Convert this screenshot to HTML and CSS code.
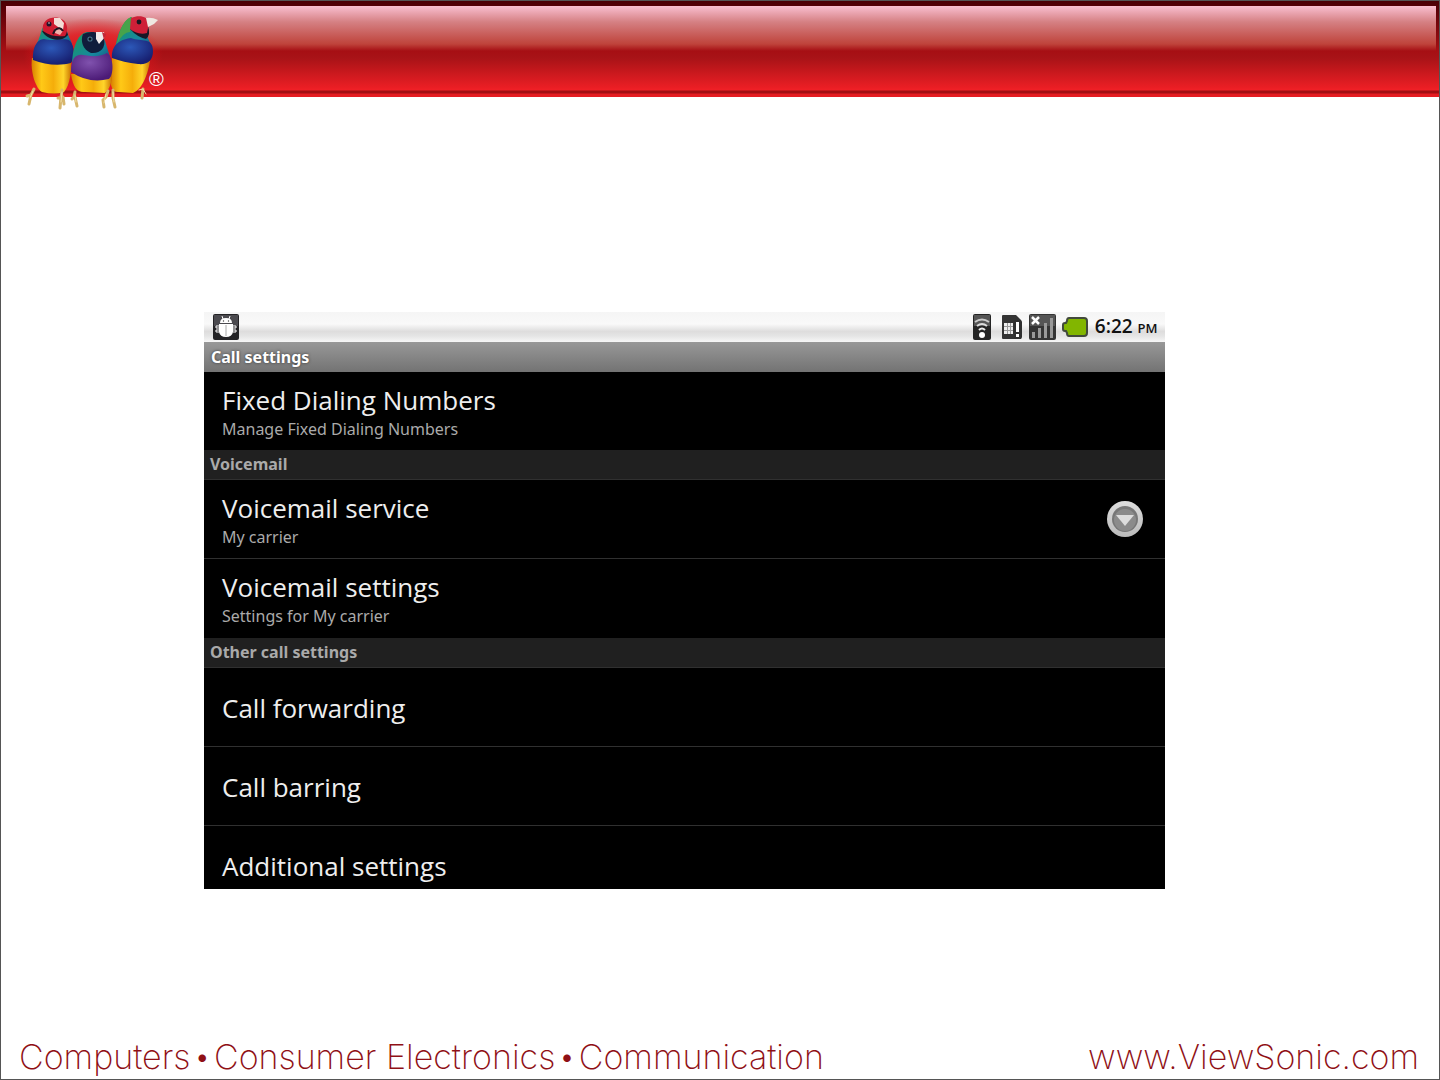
FILE: index.html
```html
<!DOCTYPE html>
<html lang="en">
<head>
  <meta charset="UTF-8" />
  <meta name="viewport" content="width=device-width, initial-scale=1.0" />
  <title>Call settings</title>
  <link rel="stylesheet" href="styles.css">
</head>
<body>
  <header class="banner">
    <svg class="logo" viewBox="0 0 150 110" role="img" aria-label="ViewSonic">
      <defs>
        <linearGradient id="belly" x1="0" x2="1" y1="0" y2="0">
          <stop offset="0" stop-color="#d98200" />
          <stop offset=".25" stop-color="#ffc917" />
          <stop offset=".55" stop-color="#f5ad0a" />
          <stop offset=".8" stop-color="#ffd52a" />
          <stop offset="1" stop-color="#c97100" />
        </linearGradient>
        <radialGradient id="blue" cx=".45" cy=".35" r=".65">
          <stop offset="0" stop-color="#2c58b8" />
          <stop offset="1" stop-color="#171f70" />
        </radialGradient>
        <radialGradient id="purple" cx=".45" cy=".35" r=".65">
          <stop offset="0" stop-color="#8052ae" />
          <stop offset="1" stop-color="#4c1b77" />
        </radialGradient>
        <linearGradient id="teal" x1="0" x2="1" y1="0" y2="1">
          <stop offset="0" stop-color="#1b9a58" />
          <stop offset=".6" stop-color="#16889f" />
          <stop offset="1" stop-color="#124a78" />
        </linearGradient>
        <radialGradient id="glow">
          <stop offset="0" stop-color="#e8141c" />
          <stop offset=".6" stop-color="#e8141c" stop-opacity=".7" />
          <stop offset="1" stop-color="#e8141c" stop-opacity="0" />
        </radialGradient>
      </defs>

      <ellipse fill="url(#glow)" cx="72" cy="55" rx="70" ry="37" />

      <!-- left bird -->
      <path fill="url(#belly)" d="M11 58 C9 72 15 89 21 92 Q34 95 43 92 C49 85 51 70 50 58Z" />
      <path fill="url(#teal)" d="M13 50 C16 43 19 37 21 29 C26 21 43 20 46 31 C47 37 52 42 52 50Z" />
      <path fill="url(#blue)" d="M12 60 C11 48 16 39 23 39 C34 42 43 37 49 41 C54 47 54 58 50 63 C39 66 24 65 12 60Z" />
      <path fill="#1c1728" d="M21 31 C25 39 39 44 47 35 L44 26Z" />
      <path fill="#cf1b30" d="M22 31 C20 20 30 16 38 18 C47 20 48 31 44 36 C37 37 29 36 22 31Z" />
      <path fill="#f3dcd6" d="M33 18 L39 18 L43 23 L42 30 L37 27 L33 24Z" />
      <path fill="#efb0aa" d="M33 29 Q38 27 42 31 L39 35 L34 33Z" />
      <path fill="none" stroke="#201320" stroke-width="2" d="M32 34 L34 30 Q39 26 42 31" />
      <circle fill="#20152a" cx="28" cy="24" r="2.5" /><circle fill="#a1848a" cx="28" cy="23" r="1" />

      <!-- right bird -->
      <path fill="url(#belly)" d="M91 58 L90 85 Q92 93 98 92 L112 93 C122 89 127 73 129 61Z" />
      <path fill="url(#teal)" d="M94 50 C96 34 102 21 110 17 L125 34 L130 45 L129 59 L92 57Z" />
      <path fill="#47a34a" d="M98 34 C101 25 105 18 111 17 L109 32 Q102 32 96 44Z" />
      <path fill="url(#blue)" d="M91 58 C90 43 102 39 110 38 C121 42 132 37 132 51 C132 60 127 65 117 64 C107 63 99 61 91 58Z" />
      <path fill="#171727" d="M109 29 Q116 37 125 39 Q130 35 127 26 L117 26Z" />
      <path fill="#ce2038" d="M110 18 C119 14 127 17 128 23 L126 33 C119 35 113 32 109 29Z" />
      <path fill="#eee8e1" d="M125 18 Q131 17 137 20 L133 24 L127 27Z" />
      <circle fill="#1a1821" cx="118" cy="22" r="2.4" />

      <!-- middle bird -->
      <path fill="url(#belly)" d="M50 74 C52 88 57 93 64 92 L84 93 C90 88 91 80 91 72Z" />
      <path fill="url(#teal)" d="M51 66 C51 49 56 34 66 32 Q79 31 84 41 L89 57Z" />
      <path fill="url(#purple)" d="M50 72 C50 58 55 54 62 55 Q78 58 86 53 C93 57 93 75 88 79 Q68 84 50 72Z" />
      <path fill="#101d3c" d="M62 34 C70 30 80 32 83 39 C85 48 79 54 70 53 C62 50 59 41 62 34Z" />
      <path fill="#f0eaea" d="M75 32 L83 32 L84 37 L78 44 L75 39Z" /><path fill="#c22636" d="M81 32 L85 34 L83 40Z" />
      <circle fill="#47738b" cx="69" cy="39" r="2.6" /><circle fill="#071121" cx="69" cy="39" r="1.5" />

      <!-- feet -->
      <g fill="none" stroke="#d7b66d" stroke-width="3" stroke-linecap="round">
        <path d="M13 89 L10 95 L6 96 M10 95 L8 104 M41 90 L40 98 L37 98 M40 97 L39 108 M42 97 L43 104" />
        <path d="M54 92 L53 97 L51 99 M54 97 L56 106 M87 91 L85 97 L82 100 L83 107 M92 90 L92 98 L94 107 M122 89 L121 98" />
      </g>
      <g fill="none" stroke="#f3e0aa" stroke-linecap="round">
        <path d="M12 91 L9 98 M41 92 L40 102 M54 95 L55 102 M85 94 L83 103 M92 92 L93 102 M118 90 L122 89 L125 94" />
      </g>
    </svg>
    <span class="registered">®</span>
  </header>

  <main class="screen">
    <div class="status-bar">
      <svg class="icon-debug" viewBox="0 0 26 26" aria-hidden="true">
        <rect width="26" height="26" rx="2" fill="#242326" />
        <rect x="1" y="1" width="24" height="11" fill="#4b4a4f" />
        <path fill="#fff" d="M7 9 Q7 4 13 4 T19 9Z M6 10 H20 V18 Q19 23 13 23 T6 18Z" />
        <path stroke="#fff" fill="none" d="M9 2 L10 5 M17 2 L16 5 M6 12 H3 V14 H6 M6 16 H3 V18 H6 M20 12 H23 V14 H20 M20 16 H23 V18 H20" />
        <path stroke="#aaa" d="M13 11 V22" /><circle cx="10.500" cy="7" r=".7" fill="#444" /><circle cx="15.500" cy="7" r=".7" fill="#444" />
      </svg>
      <div class="status-icons">
        <svg class="icon-wifi" viewBox="0 0 18 26" aria-hidden="true">
          <rect width="18" height="26" rx="2" fill="#242424" /><path fill="#555" d="M1 1 H17 V12 H1Z" />
          <g fill="none" stroke-width="2"><path stroke="#ccc" d="M2 8 Q9 3 16 8" /><path stroke="#ddd" d="M4 12 Q9 8 14 12" /><path stroke="#eee" d="M6 16 Q9 13 12 16" /></g>
          <circle cx="9" cy="21" r="3" fill="#fff" />
        </svg>
        <svg class="icon-sim" viewBox="0 0 22 26" aria-hidden="true">
          <path fill="#343434" d="M1 2 Q1 1 2 1 H15 L20 6 V25 H2 Q1 25 1 24Z" />
          <path fill="#eee" d="M3 9 H12 V20 H3Z" /><path stroke="#999" d="M3 12.500 H12 M3 16.500 H12 M6.500 9 V20 M9.500 9 V20" />
          <rect x="13" y="6" width="8" height="19" rx="2" fill="#303030" /><rect x="15" y="8" width="3" height="10" fill="#fff" /><rect x="15" y="20" width="3" height="3" fill="#fff" />
        </svg>
        <svg class="icon-signal" viewBox="0 0 27 26" aria-hidden="true">
          <rect width="27" height="26" rx="2" fill="#343434" /><path fill="#555" d="M1 1 H26 V12 H1Z" />
          <path fill="#999" d="M3 18 h3 v6 h-3z M9 14 h3 v10 h-3z M15 9 h3 v15 h-3z M21 4 h3 v20 h-3z" />
          <path stroke="#fff" stroke-width="2.500" d="M3 3 L10 10 M10 3 L3 10" />
        </svg>
        <svg class="icon-battery" viewBox="0 0 26 20" aria-hidden="true">
          <path fill="#82b600" stroke="#424a3b" stroke-width="2" d="M7 1 H22 Q25 1 25 4 V16 Q25 19 22 19 H7 Q5 19 5 16 L4 14 H3 Q1 14 1 12 V8 Q1 6 3 6 H4 L5 4 Q5 1 7 1Z" />
        </svg>
      </div>
      <time class="clock">6:22 <small>PM</small></time>
    </div>

    <h1 class="title-bar">Call settings</h1>

    <ul class="settings">
      <li class="item short">
        <a href="#fdn"><span class="name">Fixed Dialing Numbers</span><span class="summary">Manage Fixed Dialing Numbers</span></a>
      </li>
    </ul>
    <h2 class="category">Voicemail</h2>
    <ul class="settings">
      <li class="item">
        <button type="button" class="service">
          <span class="label"><span class="name">Voicemail service</span><span class="summary">My carrier</span></span>
          <svg class="icon-more" viewBox="0 0 38 38" aria-hidden="true">
            <defs><linearGradient id="ring" x2="0" y2="1"><stop stop-color="#ddd" /><stop offset="1" stop-color="#bbb" /></linearGradient></defs>
            <circle cx="19" cy="18" r="18" fill="url(#ring)" /><circle cx="19" cy="18" r="13" fill="#777" /><circle cx="19" cy="19" r="11" fill="#8b8b8b" />
            <path fill="#ddd" d="M10 14 H28 L19 25Z" />
          </svg>
        </button>
      </li>
      <li class="item">
        <a href="#voicemail"><span class="name">Voicemail settings</span><span class="summary">Settings for My carrier</span></a>
      </li>
    </ul>
    <h2 class="category">Other call settings</h2>
    <ul class="settings">
      <li class="item"><a href="#forwarding"><span class="name">Call forwarding</span></a></li>
      <li class="item"><a href="#barring"><span class="name">Call barring</span></a></li>
      <li class="item cut"><a href="#additional"><span class="name">Additional settings</span></a></li>
    </ul>
  </main>

  <footer class="footer">
    <p>
      <span>Computers</span>
      <b>•</b>
      <span>Consumer Electronics</span>
      <b>•</b>
      <span>Communication</span>
    </p>
    <a href="#home">www.ViewSonic.com</a>
  </footer>
</body>
</html>
```
FILE: styles.css
```css
* {
  box-sizing: border-box;
}

body {
  margin: 0;
  min-height: 100vh;
  display: flex;
  flex-direction: column;
  border: 1px solid #555;
  background: #fff;
  font-family: "Open Sans", "Noto Sans", sans-serif;
}

.banner {
  position: relative;
  height: 96px;
  padding: 5px 3px 0 5px;
  background: linear-gradient(#4a0005 0, #5a0007 8px, #a60f14 50px, #a81317 57px, #e91e24 86px, #f02026 89px, #a20f14 90px, #a20f14 92px, #e51c22 93px);
}

/* glossy upper half */
.banner::before {
  content: "";
  display: block;
  height: 45px;
  background: linear-gradient(#f9bfd0, #d58083 16px, #bf433b 38px, #a60f14);
}

.logo {
  position: absolute;
  left: 20px;
  top: -1px;
  width: 150px;
  height: 110px;
}

.registered {
  position: absolute;
  left: 148px;
  top: 66px;
  color: #fff;
  font: 20px/24px "Liberation Sans", Arial, sans-serif;
}

.screen {
  width: 66.8%;
  margin: 215px 0 0 203px;
  background: #000;
  color: #eee;
}

.status-bar {
  display: flex;
  align-items: center;
  height: 30px;
  padding: 0 7px 0 9px;
  background: linear-gradient(#f5f5f5, #f9f9f9 40%, #dedddd 65%, #e5e5e5 80%, #f7f7f7);
}

.icon-debug {
  width: 26px;
  height: 26px;
}

.status-icons {
  display: flex;
  align-items: center;
  gap: 6px;
  margin-left: auto;
}

.icon-wifi {
  width: 18px;
  height: 26px;
  margin-right: 4px;
}

.icon-sim {
  width: 22px;
  height: 26px;
}

.icon-signal {
  width: 27px;
  height: 26px;
}

.icon-battery {
  width: 26px;
  height: 20px;
}

.clock {
  margin-left: 7px;
  color: #111;
  font-size: 19px;
  font-weight: 600;
  line-height: 30px;
}

.clock small {
  font-size: 13px;
}

.title-bar {
  margin: 0;
  padding: 0 7px;
  background: linear-gradient(#989898, #737373);
  color: #fff;
  font-family: "Noto Sans", sans-serif;
  font-size: 16px;
  line-height: 30px;
  text-shadow: 0 0 3px #333;
}

.category {
  margin: 0;
  padding: 0 6px;
  border-bottom: 1px solid #303030;
  background: #202020;
  color: #aaa;
  font-family: "Noto Sans", sans-serif;
  font-size: 16px;
  line-height: 29px;
}

.settings {
  margin: 0;
  padding: 0;
  list-style: none;
}

.item {
  height: 79px;
  border-bottom: 1px solid #303030;
}

.item:last-child {
  border-bottom: 0;
}

.item a,
.item button {
  display: flex;
  flex-direction: column;
  justify-content: center;
  width: 100%;
  height: 78px;
  padding: 2px 18px 0;
  border: 0;
  background: none;
  color: inherit;
  font-family: inherit;
  text-align: left;
  text-decoration: none;
}

.item .service {
  flex-direction: row;
  align-items: center;
  justify-content: space-between;
  padding-right: 21px;
}

.item.short {
  height: 78px;
}

.item.cut {
  height: 63px;
  overflow: hidden;
}

.label {
  display: flex;
  flex-direction: column;
}

.name {
  font-size: 26px;
  line-height: 34px;
}

.summary {
  color: #aaa;
  font-family: "Noto Sans", sans-serif;
  font-size: 16px;
  line-height: 24px;
}

.icon-more {
  width: 38px;
  height: 38px;
}

.footer {
  display: flex;
  justify-content: space-between;
  margin-top: auto;
  padding: 0 20px 0 18px;
  color: #8f1016;
  font-family: Inter, sans-serif;
  font-size: 34px;
  font-weight: 200;
  line-height: 44px;
}

.footer p {
  display: flex;
  gap: 5px;
  margin: 0;
}

.footer b {
  font-size: 24px;
}

.footer a {
  color: inherit;
  text-decoration: none;
}
```
